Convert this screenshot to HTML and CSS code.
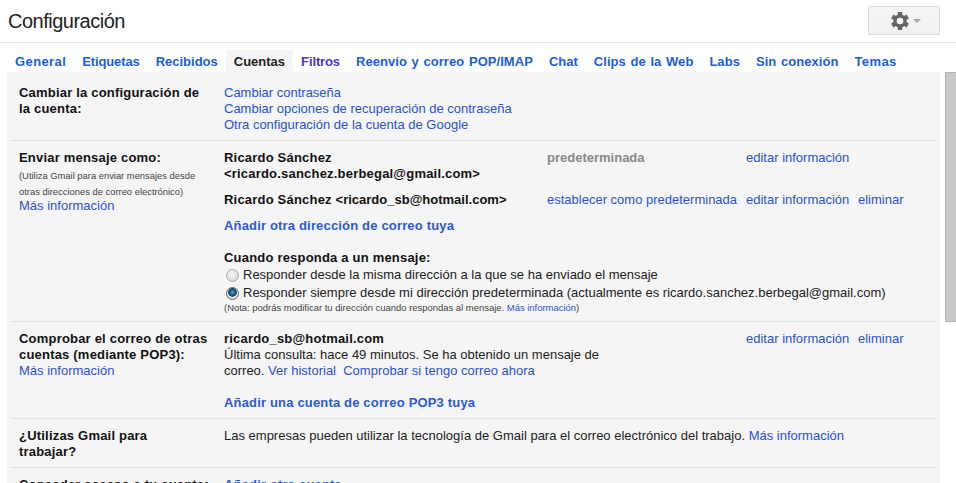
FILE: index.html
```html
<!DOCTYPE html>
<html lang="es">
<head>
    <meta charset="UTF-8">
    <title>Configuración</title>
    <link rel="stylesheet" href="styles.css">
</head>
<body>
    <!-- Cabecera -->
    <header class="top-bar">
        <h1>Configuración</h1>
        <button class="gear-button" aria-label="Configuración">
            <svg class="gear-icon" width="18" height="18" viewBox="0 0 18 18">
                <g fill="#666">
                    <circle cx="9" cy="9" r="6.7"/>
                    <rect x="6.8" y="0" width="4.4" height="18"/>
                    <rect x="6.8" y="0" width="4.4" height="18" transform="rotate(60 9 9)"/>
                    <rect x="6.8" y="0" width="4.4" height="18" transform="rotate(120 9 9)"/>
                </g>
                <circle cx="9" cy="9" r="3.3" fill="#f3f3f3"/>
            </svg>
            <span class="caret"></span>
        </button>
    </header>

    <!-- Pestañas -->
    <nav class="tabs">
        <a href="#" class="wide">General</a>
        <a href="#" class="tight">Etiquetas</a>
        <a href="#">Recibidos</a>
        <a href="#" class="active">Cuentas</a>
        <a href="#" class="visited tight">Filtros</a>
        <a href="#" class="loose">Reenvío y correo POP/IMAP</a>
        <a href="#">Chat</a>
        <a href="#" class="loose">Clips de la Web</a>
        <a href="#" class="loose">Labs</a>
        <a href="#" class="loose">Sin conexión</a>
        <a href="#" class="wide">Temas</a>
    </nav>

    <div class="content">
        <main class="panel">
            <section class="row first">
                <div class="label"><b>Cambiar la configuración de la cuenta:</b></div>
                <div class="value">
                    <a href="#">Cambiar contraseña</a><br>
                    <a href="#">Cambiar opciones de recuperación de contraseña</a><br>
                    <a href="#">Otra configuración de la cuenta de Google</a>
                </div>
            </section>

            <section class="row">
                <div class="label">
                    <b>Enviar mensaje como:</b>
                    <div class="hint">(Utiliza Gmail para enviar mensajes desde otras direcciones de correo electrónico)</div>
                    <a href="#">Más información</a>
                </div>
                <div class="value">
                    <div class="sender">
                        <b class="sender-name">Ricardo Sánchez &lt;ricardo.sanchez.berbegal@gmail.com&gt;</b>
                        <b class="default-tag">predeterminada</b>
                        <a href="#">editar información</a>
                        <span></span>
                    </div>
                    <div class="sender">
                        <b class="sender-name">Ricardo Sánchez <span class="plain-spacing">&lt;ricardo_sb@hotmail.com&gt;</span></b>
                        <a href="#">establecer como predeterminada</a>
                        <a href="#">editar información</a>
                        <a href="#">eliminar</a>
                    </div>
                    <a href="#" class="add-link">Añadir otra dirección de correo tuya</a>
                    <div class="reply-title"><b>Cuando responda a un mensaje:</b></div>
                    <label class="reply-option"><input type="radio" name="reply">Responder desde la misma dirección a la que se ha enviado el mensaje</label>
                    <label class="reply-option"><input type="radio" name="reply" checked>Responder siempre desde mi dirección predeterminada (actualmente es ricardo.sanchez.berbegal@gmail.com)</label>
                    <div class="note">(Nota: podrás modificar tu dirección cuando respondas al mensaje. <a href="#">Más información</a>)</div>
                </div>
            </section>

            <section class="row">
                <div class="label">
                    <b>Comprobar el correo de otras cuentas (mediante POP3):</b><br>
                    <a href="#">Más información</a>
                </div>
                <div class="value">
                    <div class="pop-account">
                        <div class="pop-info">
                            <b>ricardo_sb@hotmail.com</b><br>
                            Última consulta: hace 49 minutos. Se ha obtenido un mensaje de correo.
                            <a href="#">Ver historial</a>&nbsp;
                            <a href="#">Comprobar si tengo correo ahora</a>
                        </div>
                        <a href="#">editar información</a>
                        <a href="#">eliminar</a>
                    </div>
                    <a href="#" class="add-link pop-add">Añadir una cuenta de correo POP3 tuya</a>
                </div>
            </section>

            <section class="row">
                <div class="label"><b>¿Utilizas Gmail para<br>trabajar?</b></div>
                <div class="value">
                    Las empresas pueden utilizar la tecnología de Gmail para el correo electrónico del trabajo.
                    <a href="#">Más información</a>
                </div>
            </section>

            <section class="row">
                <div class="label"><b>Conceder acceso a tu cuenta:</b></div>
                <div class="value"><a href="#" class="add-link">Añadir otra cuenta</a></div>
            </section>
        </main>

        <div class="scrollbar"><div class="scroll-thumb"></div></div>
    </div>
</body>
</html>
```

FILE: styles.css
```css
/* General */
html, body {
    height: 483px;
    overflow: hidden;
}

body {
    margin: 0;
    background: #fff;
    color: #222;
    font-family: "Liberation Sans", Arial, sans-serif;
    font-size: 13px;
    line-height: 16px;
}

a {
    color: #2a52d0;
    text-decoration: none;
}

b {
    color: #111;
    letter-spacing: 0.2px;
}

/* Cabecera */
.top-bar {
    height: 42px;
    display: flex;
    justify-content: space-between;
    align-items: flex-start;
    padding: 0 16px 0 8px;
    border-bottom: 1px solid #e5e5e5;
}

.top-bar h1 {
    margin: 9px 0 0;
    font-size: 20px;
    line-height: 24px;
    font-weight: normal;
    letter-spacing: -0.5px;
    color: #222;
}

.gear-button {
    width: 72px;
    height: 29px;
    margin-top: 6px;
    padding: 0 0 0 22px;
    display: flex;
    align-items: center;
    gap: 4px;
    background: linear-gradient(#f5f5f5, #f1f1f1);
    border: 1px solid #dcdcdc;
    border-radius: 2px;
}

.caret {
    width: 0;
    height: 0;
    border-left: 4px solid transparent;
    border-right: 4px solid transparent;
    border-top: 4px solid #aaa;
}

/* Pestañas */
.tabs {
    display: flex;
    height: 22px;
    margin: 7px 0 0 7px;
}

.tabs a {
    padding: 4px 8px 2px;
    font-weight: bold;
    word-spacing: 1px;
    color: #1a5fd8;
}

.tabs a.wide {
    letter-spacing: 0.4px;
}

.tabs a.loose {
    letter-spacing: 0.05px;
}

.tabs a.tight {
    letter-spacing: -0.12px;
}

.tabs a.active {
    background: #f5f5f5;
    color: #222;
}

.tabs a.visited {
    color: #4a35c0;
}

/* Panel */
.content {
    display: flex;
    margin-left: 7px;
}

.panel {
    width: 933px;
    padding: 0 4px;
    box-sizing: border-box;
    background: #f5f5f5;
}

.row {
    display: grid;
    grid-template-columns: 213px 1fr;
    padding: 9px 0 7px;
    border-top: 1px solid #e2e2e2;
}

.row.first {
    padding-top: 13px;
    border-top: none;
}

.label {
    padding: 0 8px;
    width: 192px;
}

.value {
    min-width: 0;
}

.hint {
    margin: 2px 0 -2px;
    font-size: 9.4px;
    line-height: 16px;
    color: #444;
}

/* Direcciones */
.sender {
    display: grid;
    grid-template-columns: 323px 199px 112px 1fr;
    margin-bottom: 10px;
}

.sender-name {
    width: 290px;
}

.plain-spacing {
    letter-spacing: 0;
}

.default-tag {
    color: #888;
    letter-spacing: 0;
}

.add-link {
    display: block;
    font-weight: bold;
    letter-spacing: 0.17px;
    color: #2a5bd7;
}

.reply-title {
    margin-top: 16px;
}

.reply-option {
    display: flex;
    align-items: center;
    height: 18px;
}

.reply-option input {
    appearance: none;
    width: 13px;
    height: 13px;
    margin: 0 4px 0 2px;
    border: 1px solid #a8a8a8;
    border-radius: 50%;
    background: radial-gradient(circle at 40% 35%, #f4f4f4, #cfcfcf);
}

.reply-option input:checked {
    background: radial-gradient(circle at 50% 40%, #5aa8d8 0, #0f5c8c 32%, #0a3c60 46%, #e8e8e8 54%, #cfcfcf 100%);
    border-color: #666;
}

.note {
    font-size: 9.45px;
    line-height: 12px;
    color: #444;
}

/* POP3 */
.pop-account {
    display: grid;
    grid-template-columns: 522px 112px 1fr;
}

.pop-info {
    width: 396px;
}

.pop-add {
    margin-top: 16px;
}

/* Barra de desplazamiento */
.scrollbar {
    width: 11px;
    margin-left: 5px;
}

.scroll-thumb {
    height: 250px;
    box-sizing: border-box;
    background: #c8c8c8;
    border: 1px solid #b5b5b5;
    border-right: none;
}
```
